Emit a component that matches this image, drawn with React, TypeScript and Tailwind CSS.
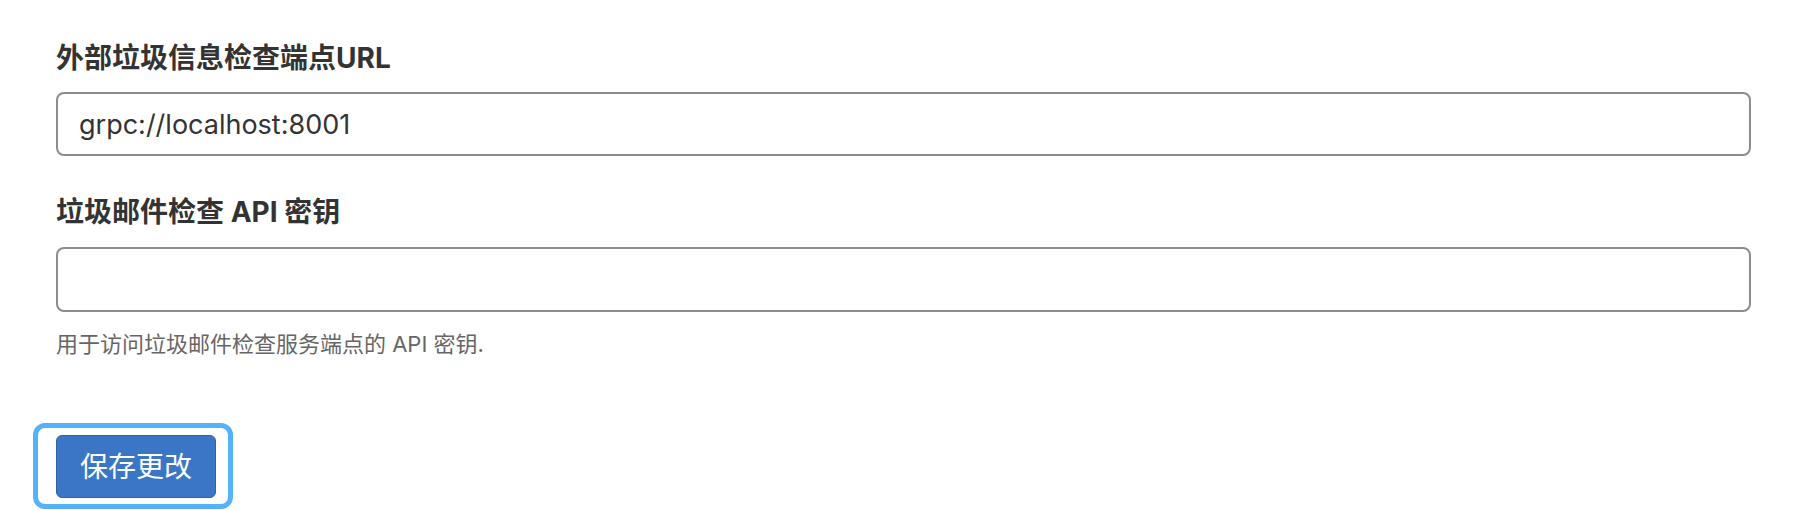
const font = {
  fontFamily: 'Inter, "Noto Sans CJK SC", "Liberation Sans", sans-serif',
}

const App = () => {
  return (
    <div className="w-[1820px] h-[510px] bg-white overflow-hidden" style={font}>
      <div className="pl-[56px] pr-[69px] pt-[38px] flex flex-col">
        {/* Endpoint URL */}
        <label className="text-[28px] leading-[40px] font-bold text-[#333333]">外部垃圾信息检查端点URL</label>
        <input
          type="text"
          defaultValue="grpc://localhost:8001"
          className="mt-[14px] h-[64px] w-full rounded-[8px] border-2 border-[#8c8c8c] px-[21px] text-[27px] text-[#333333] outline-none"
        />

        {/* API key */}
        <label className="mt-[36px] text-[28px] leading-[40px] font-bold text-[#333333]">垃圾邮件检查 API 密钥</label>
        <input
          type="text"
          className="mt-[15px] h-[65px] w-full rounded-[8px] border-2 border-[#8c8c8c] px-[21px] text-[27px] text-[#333333] outline-none"
        />
        <p className="mt-[14px] text-[22px] leading-[36px] text-[#666666]">用于访问垃圾邮件检查服务端点的 API 密钥.</p>

        {/* Save button with focus ring */}
        <div className="mt-[61px] ml-[-23px] self-start rounded-[12px] border-[5px] border-[#52b2fa] pl-[18px] pr-[12px] pt-[7px] pb-[6px]">
          <button className="w-[160px] h-[63px] rounded-[6px] border border-[#2e62a8] bg-[#3a76c5] text-[28px] text-white">
            保存更改
          </button>
        </div>
      </div>
    </div>
  )
}

export default App
